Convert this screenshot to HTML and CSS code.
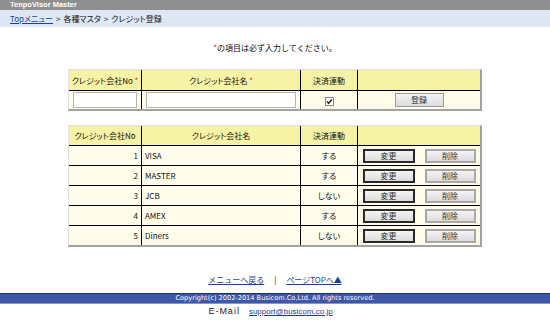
FILE: index.html
```html
<!DOCTYPE html>
<html lang="ja">
<head>
<meta charset="utf-8">
<title>クレジット登録</title>
<link rel="stylesheet" href="styles.css">
</head>
<body>
<header class="titlebar">TenpoVisor Master</header>
<nav class="crumbs"><a href="#" class="link">Topメニュー</a><span class="gt">&gt;</span>各種マスタ<span class="gt">&gt;</span>クレジット登録</nav>
<main class="content">
  <p class="note"><span class="req">*</span>の項目は必ず入力してください。</p>
  <table class="grid form">
    <colgroup><col class="c1"><col class="c2"><col class="c3"><col class="c4"></colgroup>
    <tr class="head">
      <th>クレジット会社No <span class="req">*</span></th>
      <th>クレジット会社名 <span class="req">*</span></th>
      <th>決済連動</th>
      <th class="last"></th>
    </tr>
    <tr class="row lastrow">
      <td class="center"><input class="field f-no" type="text"></td>
      <td class="center"><input class="field f-name" type="text"></td>
      <td class="center"><span class="check"><svg width="9" height="9" viewBox="0 0 9 9"><rect x="0.5" y="0.5" width="8" height="8" fill="#fff" stroke="#8a8a8a"/><polyline points="2,4.5 3.7,6.3 7,2.5" fill="none" stroke="#111" stroke-width="1.3"/></svg></span></td>
      <td class="center last"><button class="btn btn-reg" type="button">登録</button></td>
    </tr>
  </table>
  <table class="grid list">
    <colgroup><col class="c1"><col class="c2"><col class="c3"><col class="c4"></colgroup>
    <tr class="head">
      <th>クレジット会社No</th>
      <th>クレジット会社名</th>
      <th>決済連動</th>
      <th class="last"></th>
    </tr>
    <tr class="row"><td class="num">1</td><td class="name">VISA</td><td class="center">する</td><td class="center last actions"><button class="btn btn-edit" type="button">変更</button><button class="btn btn-del" type="button">削除</button></td></tr>
    <tr class="row"><td class="num">2</td><td class="name">MASTER</td><td class="center">する</td><td class="center last actions"><button class="btn btn-edit" type="button">変更</button><button class="btn btn-del" type="button">削除</button></td></tr>
    <tr class="row"><td class="num">3</td><td class="name">JCB</td><td class="center">しない</td><td class="center last actions"><button class="btn btn-edit" type="button">変更</button><button class="btn btn-del" type="button">削除</button></td></tr>
    <tr class="row"><td class="num">4</td><td class="name">AMEX</td><td class="center">する</td><td class="center last actions"><button class="btn btn-edit" type="button">変更</button><button class="btn btn-del" type="button">削除</button></td></tr>
    <tr class="row lastrow"><td class="num">5</td><td class="name">Diners</td><td class="center">しない</td><td class="center last actions"><button class="btn btn-edit" type="button">変更</button><button class="btn btn-del" type="button">削除</button></td></tr>
  </table>
</main>
<div class="links"><a href="#" class="link">メニューへ戻る</a><span class="sep">|</span><a href="#" class="link">ページTOPへ▲</a></div>
<footer class="copy">Copyright(c) 2002-2014 Busicom.Co,Ltd. All rights reserved.</footer>
<div class="mail"><span class="mail-label">E-Mail</span><a href="#" class="link mail-link">support@busicom.co.jp</a></div>
</body>
</html>
```

FILE: styles.css
```css
html, body {
  margin: 0;
  padding: 0;
  background: #fff;
}
body {
  font-family: "Noto Sans CJK JP", "DejaVu Sans", sans-serif;
  font-size: 8px;
  color: #111;
  width: 550px;
}
.titlebar {
  height: 10px;
  line-height: 10px;
  background: #8f8f8f;
  color: #fff;
  font-family: "Liberation Sans", sans-serif;
  font-weight: bold;
  font-size: 7.5px;
  padding-left: 10px;
}
.crumbs {
  height: 17px;
  line-height: 17px;
  background: #dde8f4;
  padding-left: 10px;
  font-size: 8px;
  font-feature-settings: "palt" 1;
}
.gt {
  margin: 0 3px;
}
.link {
  color: #1b3f9c;
  text-decoration: underline;
}
.content {
  display: flex;
  flex-direction: column;
  align-items: center;
}
.note {
  margin: 15px 0 0;
  line-height: 12px;
  height: 12px;
}
.req {
  color: #e02020;
}
.grid {
  table-layout: fixed;
  width: 413px;
  border-collapse: separate;
  border-spacing: 0;
  border-top: 1px solid #e2e2e2;
  border-left: 1px solid #e2e2e2;
  border-right: 2px solid #a2a2a2;
  border-bottom: 2px solid #a2a2a2;
  font-feature-settings: "palt" 1;
}
.form { margin-top: 15px; }
.list { margin-top: 14px; }
.c1 { width: 73px; }
.c2 { width: 159px; }
.c3 { width: 57px; }
.c4 { width: 122px; }
.grid th, .grid td {
  border-right: 1px solid #000;
  border-bottom: 1px solid #000;
  padding: 0 3px;
  font-weight: normal;
  white-space: nowrap;
  overflow: hidden;
}
.grid th { padding: 0 1px; }
.grid .last { border-right: none; }
.grid .lastrow td { border-bottom: none; }
.head th {
  background: #f7f3a6;
  height: 19px;
  text-align: center;
}
.form .head th { height: 20px; }
.row td {
  background: #fffdea;
  height: 19px;
}
.form .row td { height: 18px; }
.center { text-align: center; }
.num { text-align: right; }
.name { text-align: left; }
.field {
  box-sizing: border-box;
  height: 16px;
  border: 1px solid #b5b5b5;
  background: #fff;
  padding: 0;
  display: block;
  margin: 0 auto;
}
.f-no { width: 64px; }
.f-name { width: 150px; }
.check {
  display: inline-flex;
  vertical-align: middle;
}
.btn {
  box-sizing: border-box;
  height: 14px;
  margin: 0;
  padding: 0;
  font-family: "Noto Sans CJK JP", sans-serif;
  font-size: 8px;
  line-height: 10px;
  color: #333;
  background: linear-gradient(#f4f4f4, #dcdcdc);
  border: 1px solid #9a9a9a;
  vertical-align: middle;
}
.btn-reg { width: 49px; }
.actions {
  padding: 0;
}
.btn-edit {
  width: 52px;
  border: 2px solid #2a2a2a;
  margin-right: 10px;
}
.btn-del {
  width: 51px;
  border: 2px solid #a8a8a8;
}
.links {
  margin-top: 27px;
  line-height: 12px;
  height: 12px;
  text-align: center;
  font-size: 8px;
}
.sep {
  margin: 0 10px;
  color: #111;
}
.copy {
  margin-top: 7px;
  background: #3f57a7;
  border-top: 1px solid #1f3170;
  border-bottom: 1px solid #8595cc;
  color: #fff;
  text-align: center;
  font-family: "DejaVu Sans", sans-serif;
  font-size: 6.6px;
  line-height: 9px;
  height: 9px;
}
.mail {
  line-height: 13px;
  height: 13px;
  text-align: center;
  padding-right: 9px;
}
.mail-label {
  font-family: "Liberation Sans", sans-serif;
  font-size: 9px;
  font-weight: normal;
  letter-spacing: 1px;
  margin-right: 9px;
  color: #222;
}
.mail-link {
  font-family: "Liberation Sans", sans-serif;
  font-size: 8px;
}
```
